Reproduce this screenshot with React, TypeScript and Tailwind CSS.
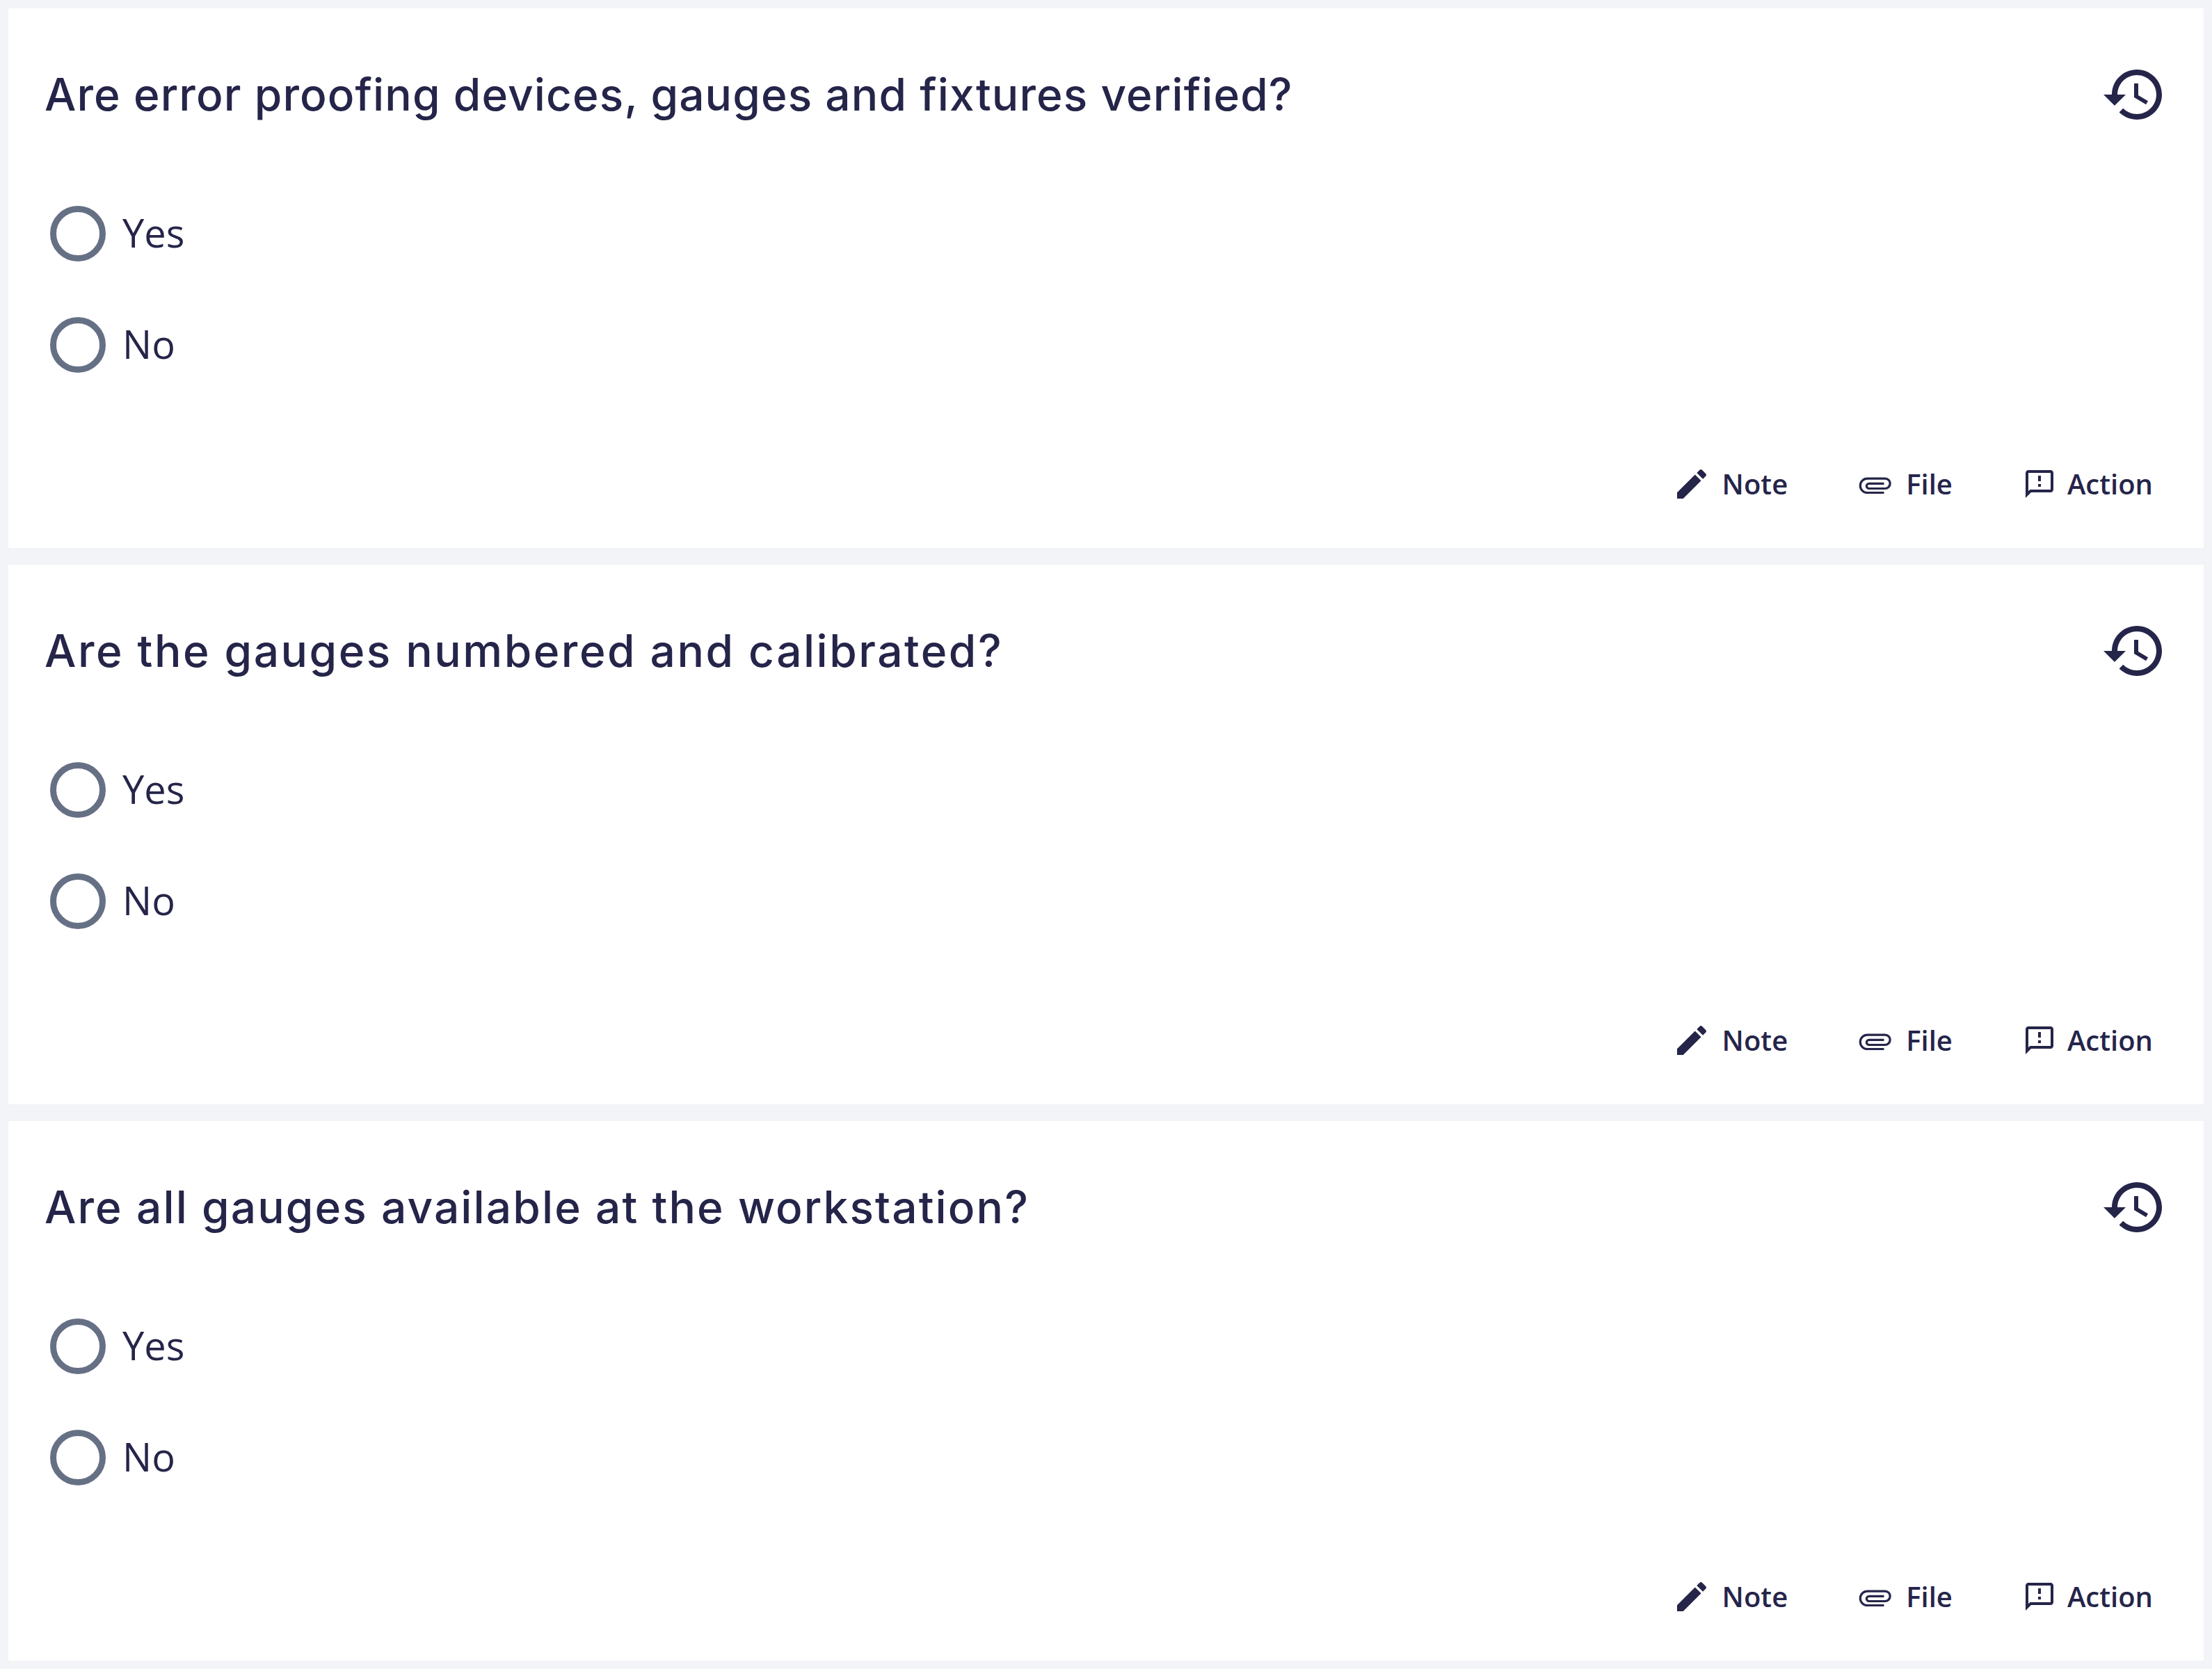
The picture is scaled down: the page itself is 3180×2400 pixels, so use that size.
import type { ReactNode } from "react";

const questions = [
  { title: "Are error proofing devices, gauges and fixtures verified?", tracking: "tracking-[1.1px]" },
  { title: "Are the gauges numbered and calibrated?", tracking: "tracking-[2.5px]" },
  { title: "Are all gauges available at the workstation?", tracking: "tracking-[2.1px]" },
];

function Icon({ d, className }: { d: string; className: string }) {
  return (
    <svg viewBox="0 0 24 24" fill="currentColor" className={className}>
      <path d={d} />
    </svg>
  );
}

const HISTORY =
  "M13 3c-4.97 0-9 4.03-9 9H1l3.89 3.89.07.14L9 12H6c0-3.87 3.13-7 7-7s7 3.13 7 7-3.13 7-7 7c-1.93 0-3.68-.79-4.94-2.06l-1.42 1.42C8.27 19.99 10.51 21 13 21c4.97 0 9-4.03 9-9s-4.03-9-9-9zm-1 5v5l4.28 2.54.72-1.21-3.5-2.08V8H12z";
const EDIT =
  "M3 17.25V21h3.75L17.81 9.94l-3.75-3.75L3 17.25zM20.71 7.04c.39-.39.39-1.02 0-1.41l-2.34-2.34c-.39-.39-1.02-.39-1.41 0l-1.83 1.83 3.75 3.75 1.83-1.83z";
const FEEDBACK =
  "M20 2H4c-1.1 0-1.99.9-1.99 2L2 22l4-4h14c1.1 0 2-.9 2-2V4c0-1.1-.9-2-2-2zm0 14H5.17L4 17.17V4h16v12zm-9-4h2v2h-2zm0-6h2v4h-2z";

function PaperClip() {
  return (
    <svg viewBox="0 0 56 56" fill="none" stroke="currentColor" strokeWidth="3.2" className="h-14 w-14">
      <path d="M40.5 40.5H16.5a10.2 10.2 0 0 1 0-20.4H42a7.2 7.2 0 0 1 0 14.4H19a3.6 3.6 0 0 1 0-7.2H40.5" />
    </svg>
  );
}

function Radio({ label }: { label: string }) {
  return (
    <div className="flex h-40 items-center pl-[60px]">
      <span className="h-20 w-20 shrink-0 rounded-full border-[9px] border-[#667085]" />
      <span className="ml-6 pb-1 text-[56px] font-normal">{label}</span>
    </div>
  );
}

function Action({ icon, label }: { icon: ReactNode; label: string }) {
  return (
    <div className="flex h-14 items-center gap-4">
      {icon}
      <span className="text-[40px] leading-[56px] font-semibold">{label}</span>
    </div>
  );
}

function Card({ title, tracking }: { title: string; tracking: string }) {
  return (
    <section className="h-[776px] bg-white pt-[76px]">
      <div className="flex h-24 items-center justify-between pr-[52px] pl-[52px]">
        <h2 className={`font-['Inter',sans-serif] text-[64px] font-medium ${tracking}`}>{title}</h2>
        <Icon d={HISTORY} className="h-24 w-24" />
      </div>
      <div className="mt-[72px]">
        <Radio label="Yes" />
        <Radio label="No" />
      </div>
      <div className="mt-[92px] flex justify-end pr-[73px]">
        <Action icon={<Icon d={EDIT} className="h-14 w-14" />} label="Note" />
        <div className="ml-[98px]">
          <Action icon={<PaperClip />} label="File" />
        </div>
        <div className="ml-[101px]">
          <Action icon={<Icon d={FEEDBACK} className="h-12 w-12" />} label="Action" />
        </div>
      </div>
    </section>
  );
}

export default function App() {
  return (
    <main className="flex min-h-[2400px] flex-col gap-6 bg-[#f2f4f7] p-3 font-['Open_Sans',sans-serif] text-[#25254a]">
      {questions.map((q) => (
        <Card key={q.title} title={q.title} tracking={q.tracking} />
      ))}
    </main>
  );
}
